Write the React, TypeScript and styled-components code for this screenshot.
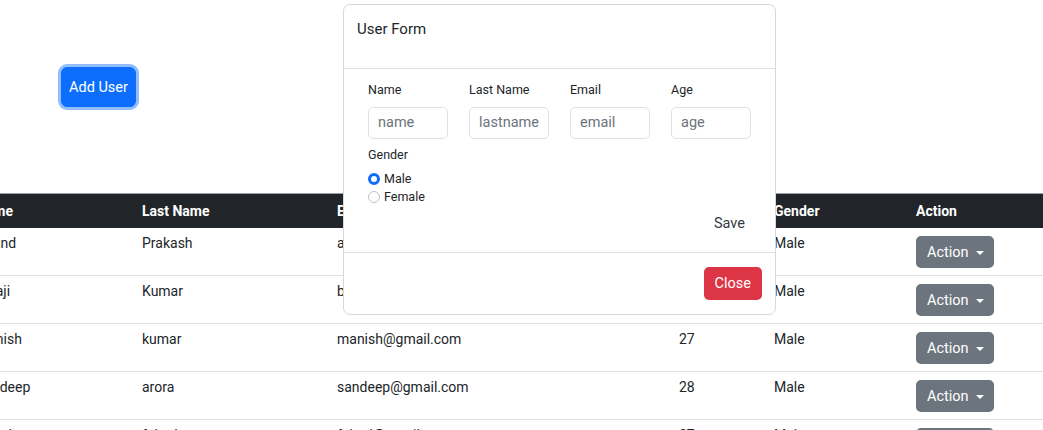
import React, { useState } from 'react'
import styled, { createGlobalStyle } from 'styled-components'

const GlobalStyle = createGlobalStyle`
  html, body {
    margin: 0;
    padding: 0;
    background: #fff;
    overflow: hidden;
  }

  body {
    font-family: Roboto, 'Liberation Sans', sans-serif;
    color: #212529;
  }

  * {
    box-sizing: border-box;
  }
`

type User = {
  name: string
  lastName: string
  email: string
  age: number
  gender: string
}

const users: User[] = [
  { name: 'Anand', lastName: 'Prakash', email: 'anand@gmail.com', age: 25, gender: 'Male' },
  { name: 'Balaji', lastName: 'Kumar', email: 'balaji@gmail.com', age: 26, gender: 'Male' },
  { name: 'Manish', lastName: 'kumar', email: 'manish@gmail.com', age: 27, gender: 'Male' },
  { name: 'Sandeep', lastName: 'arora', email: 'sandeep@gmail.com', age: 28, gender: 'Male' },
  { name: 'Mohd', lastName: 'fahad', email: 'fahad@gmail.com', age: 27, gender: 'Male' },
]

const columns = [
  { label: 'Name', width: 166 },
  { label: 'Last Name', width: 195 },
  { label: 'Email', width: 342 },
  { label: 'Age', width: 95 },
  { label: 'Gender', width: 142 },
  { label: 'Action', width: 200 },
]

export const App = () => {
  const [gender, setGender] = useState('male')

  return (
    <Page>
      <GlobalStyle />
      <TopBar>
        <PrimaryButton>Add User</PrimaryButton>
      </TopBar>

      <TableWrap>
        <Table>
          <colgroup>
            {columns.map((c) => (
              <col key={c.label} style={{ width: c.width }} />
            ))}
          </colgroup>
          <thead>
            <tr>
              {columns.map((c) => (
                <HeadCell key={c.label}>{c.label}</HeadCell>
              ))}
            </tr>
          </thead>
          <tbody>
            {users.map((u) => (
              <Row key={u.email}>
                <Cell>{u.name}</Cell>
                <Cell>{u.lastName}</Cell>
                <Cell>{u.email}</Cell>
                <Cell>{u.age}</Cell>
                <Cell>{u.gender}</Cell>
                <Cell>
                  <ActionButton>Action</ActionButton>
                </Cell>
              </Row>
            ))}
          </tbody>
        </Table>
      </TableWrap>

      <Modal>
        <ModalHeader>
          <ModalTitle>User Form</ModalTitle>
        </ModalHeader>
        <ModalBody>
          <FieldGrid>
            <Field>
              <Label>Name</Label>
              <Input placeholder='name' />
            </Field>
            <Field>
              <Label>Last Name</Label>
              <Input placeholder='lastname' />
            </Field>
            <Field>
              <Label>Email</Label>
              <Input placeholder='email' />
            </Field>
            <Field>
              <Label>Age</Label>
              <Input placeholder='age' />
            </Field>
          </FieldGrid>

          <GenderLabel>Gender</GenderLabel>
          <RadioGroup>
            <RadioRow>
              <Radio
                type='radio'
                name='gender'
                checked={gender === 'male'}
                onChange={() => setGender('male')}
              />
              Male
            </RadioRow>
            <RadioRow>
              <Radio
                type='radio'
                name='gender'
                checked={gender === 'female'}
                onChange={() => setGender('female')}
              />
              Female
            </RadioRow>
          </RadioGroup>

          <SaveRow>
            <SaveButton>Save</SaveButton>
          </SaveRow>
        </ModalBody>
        <ModalFooter>
          <DangerButton>Close</DangerButton>
        </ModalFooter>
      </Modal>
    </Page>
  )
}

const Page = styled.div`
  position: relative;
  width: 1043px;
  height: 430px;
  overflow: hidden;
`

const TopBar = styled.div`
  height: 193px;
  padding: 67px 0 0 61px;
`

const PrimaryButton = styled.button`
  height: 40px;
  padding: 0 7px;
  border: 1px solid #0d6efd;
  border-radius: 6px;
  background: #0d6efd;
  color: #fff;
  font-family: Roboto, 'Liberation Sans', sans-serif;
  font-size: 14.5px;
  box-shadow: 0 0 0 3px rgba(13, 110, 253, 0.45);
  cursor: pointer;
`

const TableWrap = styled.div`
  margin-left: -31px;
  width: 1140px;
`

const Table = styled.table`
  width: 1140px;
  border-collapse: collapse;
  table-layout: fixed;
  vertical-align: top;
  font-size: 14px;
  border-top: 1px solid #9a9ea3;
`

const HeadCell = styled.th`
  padding: 7px 7px;
  line-height: 20px;
  text-align: left;
  font-weight: 700;
  color: #fff;
  background: #212529;
`

const Row = styled.tr`
  border-bottom: 1px solid #dee2e6;
`

const Cell = styled.td`
  padding: 5px 7px 7px;
  line-height: 20px;
  vertical-align: top;
  color: #212529;
`

const ActionButton = styled.button`
  display: inline-flex;
  align-items: center;
  gap: 7px;
  height: 32px;
  margin-top: 3px;
  padding: 0 10px 0 11px;
  border: none;
  border-radius: 5px;
  background: #6c757d;
  color: #fff;
  font-family: Roboto, 'Liberation Sans', sans-serif;
  font-size: 14.5px;

  &::after {
    content: '';
    border-top: 4px solid #fff;
    border-left: 4px solid transparent;
    border-right: 4px solid transparent;
    margin-top: 1px;
  }
`

const Modal = styled.div`
  position: absolute;
  top: 4px;
  left: 343px;
  width: 433px;
  height: 311px;
  display: flex;
  flex-direction: column;
  background: #fff;
  border: 1px solid #d6d9dc;
  border-radius: 7px;
`

const ModalHeader = styled.div`
  height: 64px;
  padding: 14px 13px;
  border-bottom: 1px solid #dee2e6;
`

const ModalTitle = styled.div`
  font-size: 15px;
  line-height: 20px;
  color: #212529;
`

const ModalBody = styled.div`
  padding: 12px 30px 0 24px;
  height: 185px;
  border-bottom: 1px solid #dee2e6;
`

const FieldGrid = styled.div`
  display: grid;
  grid-template-columns: repeat(4, 80px);
  column-gap: 21px;
`

const Field = styled.div`
  display: flex;
  flex-direction: column;
`

const Label = styled.label`
  font-size: 12.5px;
  line-height: 18px;
  margin-bottom: 8px;
  color: #212529;
`

const Input = styled.input`
  width: 80px;
  height: 32px;
  padding: 0 9px;
  border: 1px solid #dee2e6;
  border-radius: 5px;
  font-family: Roboto, 'Liberation Sans', sans-serif;
  font-size: 14.5px;
  color: #212529;

  &::placeholder {
    color: #6c757d;
  }
`

const GenderLabel = styled.div`
  margin-top: 7px;
  font-size: 12.5px;
  line-height: 18px;
  color: #212529;
`

const RadioGroup = styled.div`
  margin-top: 6px;
  display: flex;
  flex-direction: column;
`

const RadioRow = styled.label`
  display: flex;
  align-items: center;
  gap: 4px;
  font-size: 12.5px;
  line-height: 18px;
  color: #212529;
`

const Radio = styled.input`
  appearance: none;
  margin: 0;
  width: 12px;
  height: 12px;
  border-radius: 50%;
  border: 1px solid #bfc4c9;
  background: #fff;

  &:checked {
    border: 3px solid #0d6efd;
  }
`

const SaveRow = styled.div`
  display: flex;
  justify-content: flex-end;
  margin-top: 8px;
`

const SaveButton = styled.button`
  padding: 0;
  border: none;
  background: transparent;
  font-family: Roboto, 'Liberation Sans', sans-serif;
  font-size: 14.5px;
  line-height: 20px;
  color: #343a40;
`

const ModalFooter = styled.div`
  display: flex;
  justify-content: flex-end;
  align-items: flex-start;
  padding: 14px 13px;
`

const DangerButton = styled.button`
  height: 33px;
  padding: 0 11px;
  border: none;
  border-radius: 5px;
  background: #dc3545;
  color: #fff;
  font-family: Roboto, 'Liberation Sans', sans-serif;
  font-size: 14.5px;
`

export default App
